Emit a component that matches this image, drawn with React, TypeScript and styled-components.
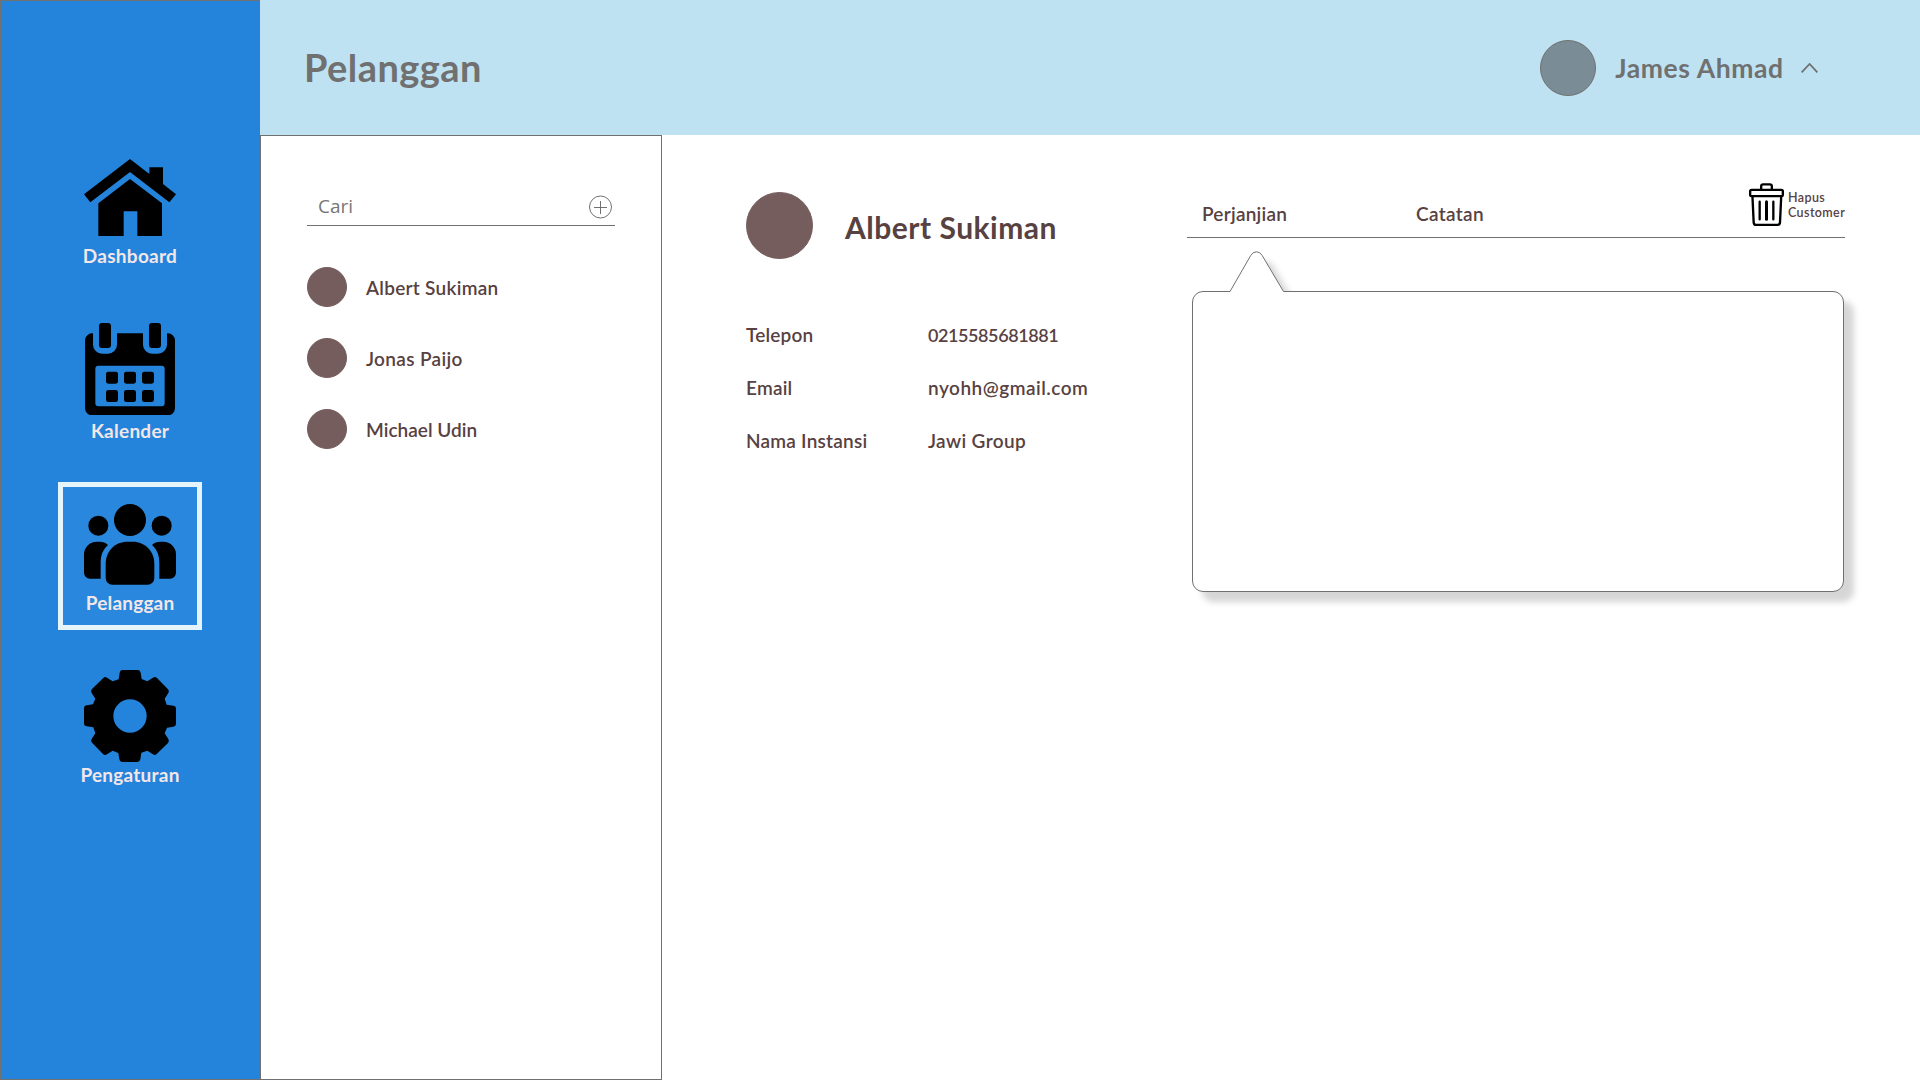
import React from 'react';
import styled, { createGlobalStyle } from 'styled-components';

const GlobalStyle = createGlobalStyle`
  *, *::before, *::after { box-sizing: border-box; }
  body { margin: 0; background: #fff; overflow: hidden; }
  svg { display: block; flex: none; }
`;

const Shell = styled.div`
  display: flex;
  width: 1920px;
  height: 1080px;
  background: #fff;
  font-family: Lato, 'Open Sans', sans-serif;
  font-weight: 600;
  color: #584141;
`;

const Sidebar = styled.nav`
  flex: none;
  width: 260px;
  padding-top: 137px;
  display: flex;
  flex-direction: column;
  align-items: center;
  gap: 24px;
  background: #2484db;
  border: 1px solid #707070;
`;

const NavItem = styled.a<{ $active?: boolean; $bottom?: number }>`
  width: 144px;
  height: 148px;
  padding-bottom: ${(p) => p.$bottom ?? 11}px;
  display: flex;
  flex-direction: column;
  align-items: center;
  justify-content: flex-end;
  border: 5px solid ${(p) => (p.$active ? '#e5f3fa' : 'transparent')};
  background: ${(p) => (p.$active ? '#2988dd' : 'transparent')};
`;

const NavLabel = styled.span<{ $gap: number; $track: number }>`
  margin-top: ${(p) => p.$gap}px;
  font-size: 19px;
  font-weight: 700;
  line-height: 22px;
  letter-spacing: ${(p) => p.$track}px;
  color: #f3e6e8;
`;

const Main = styled.main`
  flex: 1;
  display: flex;
  flex-direction: column;
`;

const Header = styled.header`
  height: 135px;
  padding: 0 102px 0 44px;
  display: flex;
  align-items: center;
  justify-content: space-between;
  background: #bee2f2;
  color: #707070;
`;

const Title = styled.h1`
  margin: 0;
  padding-bottom: 2px;
  font-size: 38px;
  font-weight: 700;
  line-height: 44px;
  letter-spacing: 0.45px;
`;

const Account = styled.div`
  display: flex;
  align-items: center;
`;

const AccountName = styled.span`
  width: 168px;
  margin: 0 18px 0 19px;
  font-size: 26.5px;
  font-weight: 700;
  line-height: 30px;
  letter-spacing: 0.6px;
  white-space: nowrap;
`;

const Avatar = styled.span<{ $size: number; $header?: boolean }>`
  flex: none;
  width: ${(p) => p.$size}px;
  height: ${(p) => p.$size}px;
  border-radius: 50%;
  background: ${(p) => (p.$header ? '#7a8c96' : '#755d5d')};
  border: 1px solid ${(p) => (p.$header ? '#707070' : '#755d5d')};
`;

const Body = styled.div`
  flex: 1;
  display: flex;
`;

const ListPanel = styled.aside`
  width: 402px;
  padding: 51px 46px 0;
  border: 1px solid #707070;
`;

const Search = styled.div`
  height: 39px;
  padding: 0 2px 0 11px;
  display: flex;
  align-items: center;
  justify-content: space-between;
  border-bottom: 1px solid #707070;
  font-family: 'Open Sans', 'Noto Sans', sans-serif;
  font-size: 19px;
  font-weight: 400;
  color: #767676;

  svg { margin-top: 2px; }
`;

const People = styled.div`
  margin-top: 41px;
  display: flex;
  flex-direction: column;
  gap: 31px;
`;

const Person = styled.div`
  height: 40px;
  display: flex;
  align-items: center;
  gap: 19px;
`;

const Text = styled.span<{ $track?: number; $drop?: number; $size?: number }>`
  padding-top: ${(p) => p.$drop ?? 0}px;
  font-size: ${(p) => p.$size ?? 19}px;
  line-height: 22px;
  letter-spacing: ${(p) => p.$track ?? 0}px;
  white-space: nowrap;
`;

const Profile = styled.section`
  width: 525px;
  padding: 57px 0 0 84px;
`;

const ProfileHead = styled.div`
  display: flex;
  align-items: center;
  gap: 32px;
`;

const ProfileName = styled.h2`
  margin: 0;
  padding-top: 2px;
  font-size: 30px;
  font-weight: 700;
  line-height: 36px;
  letter-spacing: 0.5px;
  white-space: nowrap;
`;

const Facts = styled.div`
  margin-top: 65px;
  display: grid;
  grid-template-columns: 182px 1fr;
  row-gap: 31px;
`;

const Activity = styled.section`
  flex: 1;
  padding-right: 75px;
`;

const Tabs = styled.div`
  height: 103px;
  padding-left: 15px;
  display: grid;
  grid-template-columns: 214px 333px 1fr;
  align-items: end;
  border-bottom: 1px solid #707070;
`;

const Tab = styled.span<{ $track: number }>`
  padding-bottom: 12px;
  font-size: 19px;
  line-height: 22px;
  letter-spacing: ${(p) => p.$track}px;
`;

const Remove = styled.div`
  padding-bottom: 11px;
  display: flex;
  align-items: center;
  gap: 4px;
`;

const RemoveText = styled.span`
  font-size: 12.5px;
  line-height: 15px;
  letter-spacing: 0.4px;
  white-space: nowrap;
`;

const Bubble = styled.div`
  position: relative;
  width: 652px;
  height: 301px;
  margin: 53px 0 0 5px;
  background: #fff;
  border: 1px solid #707070;
  border-radius: 11px;
  filter: drop-shadow(10.5px 10.5px 3px rgba(0, 0, 0, 0.16));
`;

const Tail = styled.svg`
  position: absolute;
  left: 36px;
  top: -41px;
`;

const HouseIcon = () => (
  <svg width="92" height="77" viewBox="252 86 276 231">
    <path d="M390 86 448 131V111H489V161L528 192 508 216 390 125 271 216 252 192Z" />
    <path d="M390 146 486 219V317H412V243H371V317H295V219Z" />
  </svg>
);

const CalendarIcon = () => (
  <svg width="92" height="92.3" viewBox="252 578 276 277">
    <path
      fillRule="evenodd"
      d="M276 609H279V643A27 27 0 0 0 306 670H324A27 27 0 0 0 351 643V609H429V643A27 27 0 0 0 456 670H474A27 27 0 0 0 501 643V609H504A21 21 0 0 1 525 630V834A21 21 0 0 1 504 855H276A21 21 0 0 1 255 834V630A21 21 0 0 1 276 609ZM295 706A9 9 0 0 0 286 715V819A9 9 0 0 0 295 828H485A9 9 0 0 0 494 819V715A9 9 0 0 0 485 706Z"
    />
    <rect x="297" y="578" width="36" height="75" rx="9" />
    <rect x="447" y="578" width="36" height="75" rx="9" />
    {[318, 372, 426].map((x) =>
      [724, 779].map((y) => <rect key={`${x}-${y}`} x={x} y={y} width="36" height="36" rx="7" />),
    )}
  </svg>
);

const shoulder =
  'M132 251A38 38 0 0 1 170 213H179C189 213 197 216 204 223C187 239 182 255 182 280V324H150A18 18 0 0 1 132 306Z';

const PeopleIcon = () => (
  <svg width="92" height="81" viewBox="132 100 276 243">
    <circle cx="270" cy="148" r="48" />
    <circle cx="175" cy="165" r="30" />
    <circle cx="365" cy="165" r="30" />
    <path d="M197 280C197 240 226 213 262 213H278C316 213 343 242 343 280V322A20 20 0 0 1 323 342H217A20 20 0 0 1 197 322Z" />
    <path d={shoulder} />
    <path d={shoulder} transform="translate(540 0) scale(-1 1)" />
  </svg>
);

// One quarter of the gear outline around (0, 0); the other three are rotations of it.
const quarter: [string, number[]][] = [
  ['L', [-34, -110]],
  ['L', [-31, -130]],
  ['Q', [-30, -138, -23, -138]],
  ['L', [24, -138]],
  ['Q', [31, -138, 32, -130]],
  ['L', [35, -111]],
  ['L', [52, -104]],
  ['L', [69, -115]],
  ['Q', [76, -119, 81, -114]],
  ['L', [114, -80]],
  ['Q', [119, -75, 115, -69]],
  ['L', [104, -52]],
];

const turn = (pts: number[], times: number): number[] => {
  let out = pts;
  for (let t = 0; t < times; t += 1) {
    out = out.flatMap((v, i) => (i % 2 === 0 ? [-out[i + 1], v] : []));
  }
  return out;
};

const gearOutline = [0, 1, 2, 3]
  .flatMap((t) => quarter.map(([c, pts]) => `${c}${turn(pts, t).join(' ')}`))
  .join('')
  .replace('L', 'M');

const GearIcon = () => (
  <svg width="92" height="92" viewBox="-138 -138 276 276">
    <path fillRule="evenodd" d={`${gearOutline}ZM-50 0A50 50 0 1 0 50 0A50 50 0 1 0 -50 0Z`} />
  </svg>
);

const AddIcon = () => (
  <svg width="24" height="24" viewBox="0 0 24 24" fill="none" stroke="#707070">
    <circle cx="11.5" cy="12" r="11" />
    <path d="M5 12.5H18M11.5 6V19" />
  </svg>
);

const ChevronIcon = () => (
  <svg width="17" height="10" viewBox="0 0 17 10" fill="none" stroke="#707070" strokeWidth="1.8">
    <path d="M0.6 9.4 8.6 1 16.4 9.4" />
  </svg>
);

const TrashIcon = () => (
  <svg width="35" height="43" viewBox="147 39 105 129" fill="none" stroke="#000" strokeWidth="7" strokeLinecap="round">
    <path d="M183.5 57V49A6 6 0 0 1 189.5 43H209.5A6 6 0 0 1 215.5 49V57" />
    <rect x="150.5" y="59.5" width="98" height="19" rx="4" />
    <path d="M157.5 82 161 157Q161.5 164.5 168 164.5H233Q239.5 164.5 240 157L243.5 82" />
    <path d="M179 95V148M220 95V148" />
    <path d="M199.5 95V148" strokeWidth="9" />
  </svg>
);

const nav = [
  { label: 'Dashboard', icon: <HouseIcon />, gap: 9, bottom: 14, track: 0.27 },
  { label: 'Kalender', icon: <CalendarIcon />, gap: 5, track: 0.25 },
  { label: 'Pelanggan', icon: <PeopleIcon />, gap: 7, track: 0.2, active: true },
  { label: 'Pengaturan', icon: <GearIcon />, gap: 2, track: 0.24 },
];

const customers = [
  { name: 'Albert Sukiman', track: 0.28 },
  { name: 'Jonas Paijo', track: 0.35 },
  { name: 'Michael Udin', track: 0.03 },
];

const facts = [
  { label: 'Telepon', value: '0215585681881', lt: 0.2, vt: -0.42, size: 18 },
  { label: 'Email', value: 'nyohh@gmail.com', lt: 0.2, vt: 0.5 },
  { label: 'Nama Instansi', value: 'Jawi Group', lt: 0.23, vt: 0.37 },
];

export default function App() {
  return (
    <>
      <GlobalStyle />
      <Shell>
        <Sidebar>
          {nav.map((n) => (
            <NavItem key={n.label} $active={n.active} $bottom={n.bottom}>
              {n.icon}
              <NavLabel $gap={n.gap} $track={n.track}>{n.label}</NavLabel>
            </NavItem>
          ))}
        </Sidebar>
        <Main>
          <Header>
            <Title>Pelanggan</Title>
            <Account>
              <Avatar $size={56} $header />
              <AccountName>James Ahmad</AccountName>
              <ChevronIcon />
            </Account>
          </Header>
          <Body>
            <ListPanel>
              <Search>
                <span>Cari</span>
                <AddIcon />
              </Search>
              <People>
                {customers.map((c) => (
                  <Person key={c.name}>
                    <Avatar $size={40} />
                    <Text $track={c.track} $drop={2}>{c.name}</Text>
                  </Person>
                ))}
              </People>
            </ListPanel>
            <Profile>
              <ProfileHead>
                <Avatar $size={67} />
                <ProfileName>Albert Sukiman</ProfileName>
              </ProfileHead>
              <Facts>
                {facts.map((f) => (
                  <React.Fragment key={f.label}>
                    <Text $track={f.lt}>{f.label}</Text>
                    <Text $track={f.vt} $size={f.size}>{f.value}</Text>
                  </React.Fragment>
                ))}
              </Facts>
            </Profile>
            <Activity>
              <Tabs>
                <Tab $track={0.24}>Perjanjian</Tab>
                <Tab $track={0.35}>Catatan</Tab>
                <Remove>
                  <TrashIcon />
                  <RemoveText>
                    Hapus
                    <br />
                    Customer
                  </RemoveText>
                </Remove>
              </Tabs>
              <Bubble>
                <Tail width="56" height="42" viewBox="0 0 56 42">
                  <path d="M1 42V40.5L21.7 4.5Q23.7 0.8 27.4 0.8Q31.2 0.8 33.2 4.5L54.5 40.5V42Z" fill="#fff" />
                  <path d="M1 40.5 21.7 4.5Q23.7 0.8 27.4 0.8Q31.2 0.8 33.2 4.5L54.5 40.5" fill="none" stroke="#707070" />
                </Tail>
              </Bubble>
            </Activity>
          </Body>
        </Main>
      </Shell>
    </>
  );
}
